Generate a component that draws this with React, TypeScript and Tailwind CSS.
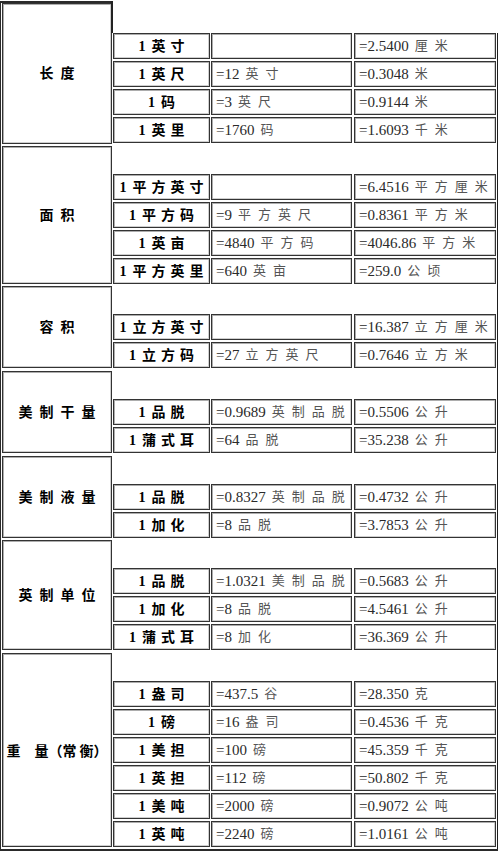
import type { ReactNode } from 'react';

type Cell = [string, string] | null;

interface Row {
  unit: string;
  mid: Cell;
  metric: [string, string];
}

interface Group {
  label: string;
  gap: string;
  rows: Row[];
}

const GROUPS: Group[] = [
  {
    label: '长度',
    gap: 'pt-0',
    rows: [
      { unit: '英寸', mid: null, metric: ['=2.5400', '厘米'] },
      { unit: '英尺', mid: ['=12', '英寸'], metric: ['=0.3048', '米'] },
      { unit: '码', mid: ['=3', '英尺'], metric: ['=0.9144', '米'] },
      { unit: '英里', mid: ['=1760', '码'], metric: ['=1.6093', '千米'] },
    ],
  },
  {
    label: '面积',
    gap: 'pt-[2px]',
    rows: [
      { unit: '平方英寸', mid: null, metric: ['=6.4516', '平方厘米'] },
      { unit: '平方码', mid: ['=9', '平方英尺'], metric: ['=0.8361', '平方米'] },
      { unit: '英亩', mid: ['=4840', '平方码'], metric: ['=4046.86', '平方米'] },
      { unit: '平方英里', mid: ['=640', '英亩'], metric: ['=259.0', '公顷'] },
    ],
  },
  {
    label: '容积',
    gap: 'pt-[2px]',
    rows: [
      { unit: '立方英寸', mid: null, metric: ['=16.387', '立方厘米'] },
      { unit: '立方码', mid: ['=27', '立方英尺'], metric: ['=0.7646', '立方米'] },
    ],
  },
  {
    label: '美制干量',
    gap: 'pt-[3px]',
    rows: [
      { unit: '品脱', mid: ['=0.9689', '英制品脱'], metric: ['=0.5506', '公升'] },
      { unit: '蒲式耳', mid: ['=64', '品脱'], metric: ['=35.238', '公升'] },
    ],
  },
  {
    label: '美制液量',
    gap: 'pt-[3px]',
    rows: [
      { unit: '品脱', mid: ['=0.8327', '英制品脱'], metric: ['=0.4732', '公升'] },
      { unit: '加化', mid: ['=8', '品脱'], metric: ['=3.7853', '公升'] },
    ],
  },
  {
    label: '英制单位',
    gap: 'pt-[2px]',
    rows: [
      { unit: '品脱', mid: ['=1.0321', '美制品脱'], metric: ['=0.5683', '公升'] },
      { unit: '加化', mid: ['=8', '品脱'], metric: ['=4.5461', '公升'] },
      { unit: '蒲式耳', mid: ['=8', '加化'], metric: ['=36.369', '公升'] },
    ],
  },
  {
    label: '重量（常衡）',
    gap: 'pt-[3px] pb-[2px]',
    rows: [
      { unit: '盎司', mid: ['=437.5', '谷'], metric: ['=28.350', '克'] },
      { unit: '磅', mid: ['=16', '盎司'], metric: ['=0.4536', '千克'] },
      { unit: '美担', mid: ['=100', '磅'], metric: ['=45.359', '千克'] },
      { unit: '英担', mid: ['=112', '磅'], metric: ['=50.802', '千克'] },
      { unit: '美吨', mid: ['=2000', '磅'], metric: ['=0.9072', '公吨'] },
      { unit: '英吨', mid: ['=2240', '磅'], metric: ['=1.0161', '公吨'] },
    ],
  },
];

const HEIGHTS: Record<number, string> = {
  2: 'h-[82px]',
  3: 'h-[110px]',
  4: 'h-[138px]',
  6: 'h-[194px]',
};

// old-school html table cell look: dark line with a soft grey inner line
const box = 'border border-[#333] shadow-[inset_1px_1px_0_#adadad,inset_-1px_-1px_0_#cfcfcf] bg-white';

function Value({ v }: { v: Cell }) {
  if (!v) return null;
  return (
    <>
      <span className="text-[15px] text-[#2a2a2a]">{v[0]}</span>
      <span className="ml-[6px] text-[13px] tracking-[7px] text-[#555]">{v[1]}</span>
    </>
  );
}

function DataRow({ row }: { row: Row }) {
  return (
    <div className="flex h-[26px]">
      <div className={`${box} w-[97px] flex items-center justify-center font-bold text-black`}>
        <span className="text-[14px] mr-[6px]">1</span>
        <span className="text-[14px] tracking-[5px] -mr-[5px]">{row.unit}</span>
      </div>
      <div className={`${box} ml-[1px] w-[141px] flex items-center pl-[4px] whitespace-nowrap`}>
        <Value v={row.mid} />
      </div>
      <div className={`${box} ml-[2px] w-[142px] flex items-center pl-[4px] whitespace-nowrap`}>
        <Value v={row.metric} />
      </div>
    </div>
  );
}

function LabelCell({ label, className }: { label: string; className: string }) {
  return (
    <div className={`${box} w-[110px] flex items-center justify-center font-bold text-[14px] text-black ${className}`}>
      {label === '重量（常衡）' ? (
        <span className="whitespace-nowrap font-['Noto_Sans_CJK_SC',sans-serif]">
          <span>重</span>
          <span className="ml-[14px]">量（常</span>
          <span className="ml-[3px]">衡）</span>
        </span>
      ) : (
        <span className="tracking-[7px] -mr-[7px]">{label}</span>
      )}
    </div>
  );
}

function Rows({ rows, children }: { rows: Row[]; children?: ReactNode }) {
  return (
    <div className="flex flex-col gap-[2px]">
      {children}
      {rows.map((r, i) => (
        <DataRow key={i} row={r} />
      ))}
    </div>
  );
}

export default function App() {
  const [first, ...rest] = GROUPS;

  return (
    <div className="w-[500px] min-h-[853px] bg-white pt-[1px] font-['Liberation_Serif','Noto_Sans_CJK_SC',serif]">
      <div className="w-[498px] border-l border-b-2 border-[#2a2a2a]">
        {/* first block: outer frame only closes over the label column at the top */}
        <div className="flex">
          <div className="w-[112px] border-t-2 border-[#2a2a2a] px-[1px]">
            <LabelCell label={first.label} className="h-[141px]" />
          </div>
          <div className="flex flex-col">
            <div className="h-[32px] -ml-[2px] border-l-2 border-[#222]" />
            <div className="flex-1 border-r border-[#1e1e1e] pr-[1px]">
              <Rows rows={first.rows} />
            </div>
          </div>
        </div>

        {rest.map((g) => (
          <div key={g.label} className={`flex border-r border-[#1e1e1e] ${g.gap}`}>
            <div className="w-[112px] px-[1px]">
              <LabelCell label={g.label} className={HEIGHTS[g.rows.length]} />
            </div>
            <div className="pr-[1px]">
              <Rows rows={g.rows}>
                <div className="h-[26px]" />
              </Rows>
            </div>
          </div>
        ))}
      </div>
    </div>
  );
}
